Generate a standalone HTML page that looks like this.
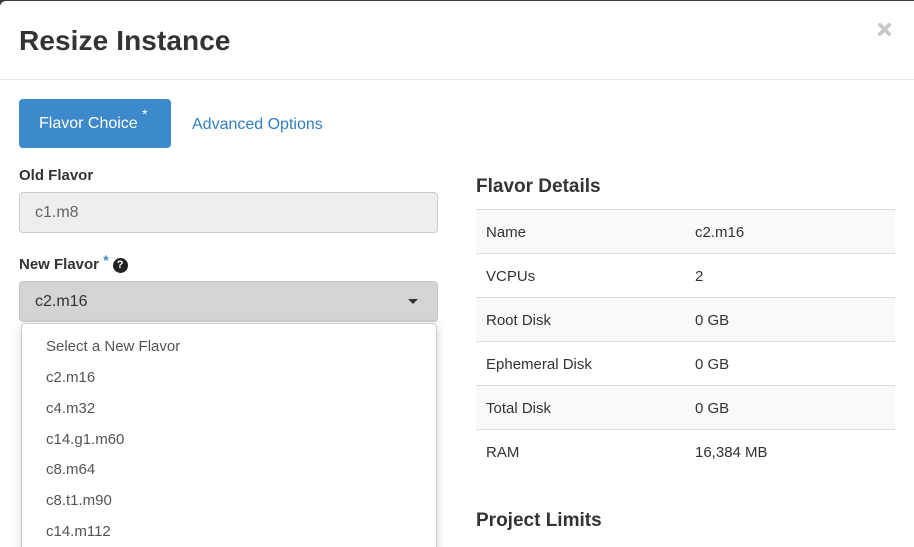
<!DOCTYPE html>
<html><head><meta charset="utf-8"><style>
*{box-sizing:border-box;margin:0;padding:0}
html,body{width:914px;height:547px;overflow:hidden;background:#3a3a3a;font-family:"Liberation Sans",sans-serif;color:#333}
.modal{position:absolute;left:0;top:1px;width:920px;height:546px;background:#fff;border-radius:6px 6px 0 0;overflow:hidden}
.title{position:absolute;left:19px;top:24px;font-size:28px;font-weight:bold;color:#333;letter-spacing:0.1px}
.close{position:absolute;left:877px;top:21px}
.hr{position:absolute;left:0;top:78px;width:914px;height:1px;background:#e5e5e5}
.btn{position:absolute;left:19px;top:98px;width:152px;height:49px;background:#3c8acb;border-radius:4px;color:#fff;font-size:16px;padding:16px 0 0 20px}
.btn sup{font-size:14px;position:relative;top:-3px;line-height:0}
.adv{position:absolute;left:192px;top:115px;font-size:16px;color:#2f7fc1}
.lbl{position:absolute;left:19px;font-size:15px;font-weight:bold;color:#333}
.inp{position:absolute;left:19px;width:419px;height:41px;border:1px solid #ccc;border-radius:4px;background:#eee;font-size:16px;color:#666;padding:11px 0 0 15px}
.sel{background:#d4d4d4;border-color:#c6c6c6;color:#333}
.star{color:#3c8acb;font-size:14px;position:relative;top:-4px;line-height:0}
.q{display:inline-block;width:15px;height:15px;border-radius:50%;background:#222;color:#fff;font-size:11px;text-align:center;line-height:15px;vertical-align:1px;margin-left:4px}
.caret{position:absolute;right:19px;top:17px;width:0;height:0;border-left:5px solid transparent;border-right:5px solid transparent;border-top:5px solid #333}
.dd{position:absolute;left:21px;top:322px;width:416px;height:240px;background:#fff;border:1px solid #ccc;border-radius:4px;box-shadow:0 4px 10px rgba(0,0,0,.18)}
.dd div{position:absolute;left:24px;font-size:15px;color:#555}
h3{position:absolute;left:476px;font-size:19px;font-weight:bold;color:#333}
table{position:absolute;left:476px;top:208px;width:419px;border-collapse:collapse;font-size:15px}
td{height:44px;border-top:1px solid #ddd;padding-left:10px;padding-top:2px;color:#333}
td+td{padding-left:0;width:200px}
tr.s td{background:#f9f9f9}
</style></head><body>
<div class="modal">
<div class="title">Resize Instance</div>
<svg class="close" width="15" height="15" viewBox="0 0 16 16"><path d="M3 3L13 13M13 3L3 13" stroke="#c8c8c8" stroke-width="4" stroke-linecap="round"/></svg>
<div class="hr"></div>
<div class="btn">Flavor Choice <sup>*</sup></div>
<div class="adv">Advanced Options</div>
<div class="lbl" style="top:166px">Old Flavor</div>
<div class="inp" style="top:191px">c1.m8</div>
<div class="lbl" style="top:255px">New Flavor <span class="star">*</span><span class="q">?</span></div>
<div class="inp sel" style="top:280px">c2.m16<span class="caret"></span></div>
<div class="dd">
<div style="top:14px">Select a New Flavor</div>
<div style="top:45px">c2.m16</div>
<div style="top:76px">c4.m32</div>
<div style="top:107px">c14.g1.m60</div>
<div style="top:137px">c8.m64</div>
<div style="top:168px">c8.t1.m90</div>
<div style="top:199px">c14.m112</div>
</div>
<h3 style="top:175px">Flavor Details</h3>
<table>
<tr class="s"><td>Name</td><td>c2.m16</td></tr>
<tr><td>VCPUs</td><td>2</td></tr>
<tr class="s"><td>Root Disk</td><td>0 GB</td></tr>
<tr><td>Ephemeral Disk</td><td>0 GB</td></tr>
<tr class="s"><td>Total Disk</td><td>0 GB</td></tr>
<tr><td>RAM</td><td>16,384 MB</td></tr>
</table>
<h3 style="top:509px">Project Limits</h3>
</div>
</body></html>
